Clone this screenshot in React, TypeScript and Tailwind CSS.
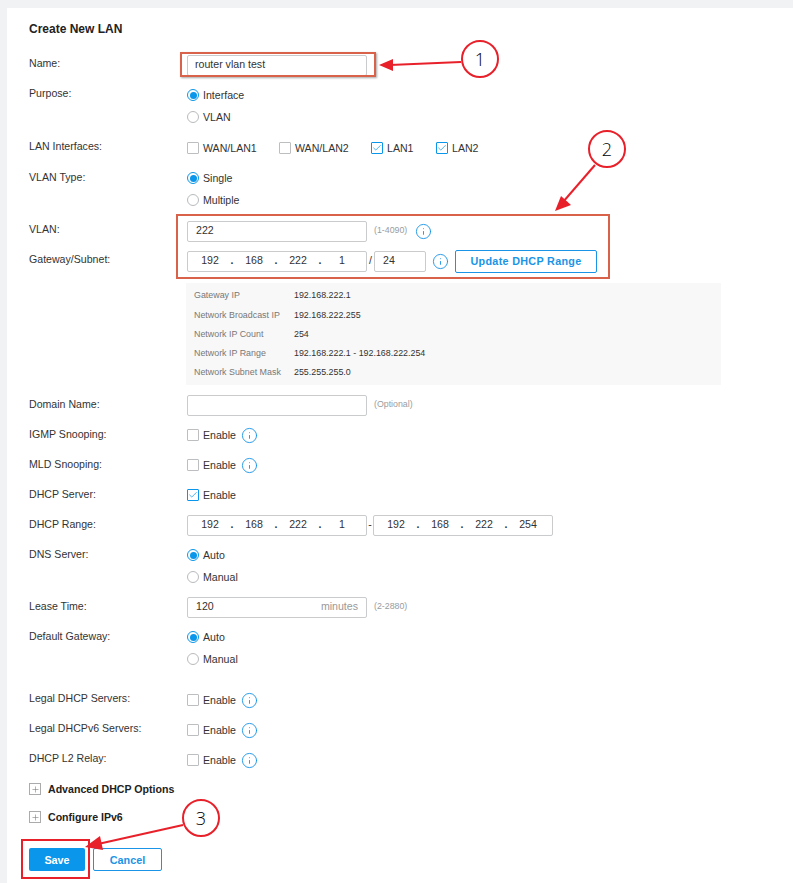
import type { ReactNode } from "react";
import { Check, Info, Plus } from "lucide-react";

const boxClass = "h-[21px] rounded-[2px] border border-[#c9cbcd] bg-white";

function Row({
  label,
  children,
  className = "mb-2",
  labelClass = "pt-[2px]",
}: {
  label?: string;
  children: ReactNode;
  className?: string;
  labelClass?: string;
}) {
  return (
    <div className={`flex ${className}`}>
      <div className={`h-[22px] w-[158px] shrink-0 text-[10.6px] leading-[14px] text-[#333] ${labelClass}`}>{label}</div>
      <div className="min-w-0 flex-1">{children}</div>
    </div>
  );
}

function Line({ children }: { children: ReactNode }) {
  return <div className="flex h-[22px] items-center">{children}</div>;
}

function Radio({ label, checked = false }: { label: string; checked?: boolean }) {
  return (
    <Line>
      {checked ? (
        <span className="flex h-3 w-3 items-center justify-center rounded-full border border-[#0a96ea] bg-white">
          <span className="h-[7px] w-[7px] rounded-full bg-[#0a96ea]" />
        </span>
      ) : (
        <span className="h-3 w-3 rounded-full border border-[#b8babc] bg-white" />
      )}
      <span className="ml-1 pt-[2px] text-[10.6px] text-[#333]">{label}</span>
    </Line>
  );
}

function CheckBox({ label, checked = false }: { label: string; checked?: boolean }) {
  return (
    <span className="flex items-center">
      {checked ? (
        <span className="flex h-3 w-3 items-center justify-center rounded-[1px] border border-[#0a96ea] text-[#0a96ea]">
          <Check size={10} strokeWidth={1.7} />
        </span>
      ) : (
        <span className="h-3 w-3 rounded-[1px] border border-[#bcbec0]" />
      )}
      <span className="ml-[4px] pt-[2px] text-[10.6px] text-[#333]">{label}</span>
    </span>
  );
}

function InfoIcon({ className = "" }: { className?: string }) {
  return <Info size={17} strokeWidth={1.3} className={`shrink-0 text-[#1a94e6] ${className}`} />;
}

function Enable({ checked = false, info = true }: { checked?: boolean; info?: boolean }) {
  return (
    <Line>
      <CheckBox label="Enable" checked={checked} />
      {info ? <InfoIcon className="ml-[5px]" /> : null}
    </Line>
  );
}

function Hint({ children }: { children: ReactNode }) {
  return <span className="ml-[7px] text-[8.8px] text-[#9a9c9e]">{children}</span>;
}

function IpBox({ parts }: { parts: string[] }) {
  return (
    <div className={`${boxClass} flex w-[180px] items-center pl-[5px] text-[10.6px] text-[#333]`}>
      {parts.map((part, i) => (
        <span key={i} className="flex items-center">
          {i > 0 ? <span className="w-[10px] text-center font-bold">.</span> : null}
          <span className="w-[34px] text-center">{part}</span>
        </span>
      ))}
    </div>
  );
}

const networkInfo = [
  ["Gateway IP", "192.168.222.1"],
  ["Network Broadcast IP", "192.168.222.255"],
  ["Network IP Count", "254"],
  ["Network IP Range", "192.168.222.1 - 192.168.222.254"],
  ["Network Subnet Mask", "255.255.255.0"],
];

function Expander({ label, className }: { label: string; className: string }) {
  return (
    <div className={`flex h-[22px] items-center ${className}`}>
      <span className="flex h-3 w-3 items-center justify-center border border-[#a9abad] text-[#777]">
        <Plus size={9} strokeWidth={1.5} />
      </span>
      <span className="ml-[7px] pt-[2px] text-[10.6px] font-bold text-[#222]">{label}</span>
    </div>
  );
}

function Callout({ n, className }: { n: string; className: string }) {
  return (
    <div
      className={`absolute flex h-[38px] w-[38px] items-center justify-center rounded-full border-2 border-[#e8202a] bg-white font-['Open_Sans',sans-serif] text-[18px] font-light text-black ${className}`}
    >
      {n}
    </div>
  );
}

export default function App() {
  return (
    <div className="relative h-[883px] w-[793px] overflow-hidden bg-[#f1f2f4] pl-[7px] pt-2 font-['Liberation_Sans',Arial,sans-serif]">
      <div className="h-full bg-white pl-[22px] pt-[11px]">
        <h1 className="mb-[15px] h-5 text-[12px] font-bold leading-5 text-[#222]">Create New LAN</h1>

        <Row label="Name:">
          <Line>
            <div className={`${boxClass} flex w-[180px] items-center pl-[7px] text-[10.6px] text-[#333]`}>router vlan test</div>
          </Line>
        </Row>
        <Row label="Purpose:" className="mb-[9px]">
          <Radio label="Interface" checked />
          <Radio label="VLAN" />
        </Row>
        <Row label="LAN Interfaces:">
          <Line>
            <span className="w-[92px]"><CheckBox label="WAN/LAN1" /></span>
            <span className="w-[92px]"><CheckBox label="WAN/LAN2" /></span>
            <span className="w-[65px]"><CheckBox label="LAN1" checked /></span>
            <CheckBox label="LAN2" checked />
          </Line>
        </Row>
        <Row label="VLAN Type:" className="mb-[9px]" labelClass="pt-[3px]">
          <Radio label="Single" checked />
          <Radio label="Multiple" />
        </Row>
        <Row label="VLAN:">
          <Line>
            <div className={`${boxClass} flex w-[180px] items-center pl-2 text-[10.6px] text-[#333]`}>222</div>
            <Hint>(1-4090)</Hint>
            <InfoIcon className="ml-[8px]" />
          </Line>
        </Row>
        <Row label="Gateway/Subnet:" className="mb-[11px]">
          <Line>
            <IpBox parts={["192", "168", "222", "1"]} />
            <span className="w-[7px] text-center text-[10.6px] text-[#333]">/</span>
            <div className={`${boxClass} flex w-[52px] items-center pl-2 text-[10.6px] text-[#333]`}>24</div>
            <InfoIcon className="ml-[6px]" />
            <button className="ml-[6px] h-[23px] w-[142px] rounded-[2px] border border-[#1a94e6] text-[10.8px] font-bold tracking-[0.3px] text-[#1a94e6]">
              Update DHCP Range
            </button>
          </Line>
        </Row>

        <div className="mb-[9px] ml-[157px] flex h-[102px] w-[535px] flex-col justify-center gap-[5.2px] bg-[#f8f8f8] pl-2 pt-[1px]">
          {networkInfo.map(([name, value]) => (
            <div key={name} className="flex h-[14px] items-center text-[8.9px]">
              <span className="w-[100px] text-[#777]">{name}</span>
              <span className="text-[#333]">{value}</span>
            </div>
          ))}
        </div>

        <Row label="Domain Name:" labelClass="pt-[3px]">
          <Line>
            <div className={`${boxClass} w-[180px]`} />
            <Hint>(Optional)</Hint>
          </Line>
        </Row>
        <Row label="IGMP Snooping:" labelClass="pt-[3px]"><Enable /></Row>
        <Row label="MLD Snooping:" labelClass="pt-[3px]"><Enable /></Row>
        <Row label="DHCP Server:" labelClass="pt-[3px]"><Enable checked info={false} /></Row>
        <Row label="DHCP Range:" labelClass="pt-[3px]">
          <Line>
            <IpBox parts={["192", "168", "222", "1"]} />
            <span className="w-[6px] text-center text-[10.6px] text-[#333]">-</span>
            <IpBox parts={["192", "168", "222", "254"]} />
          </Line>
        </Row>
        <Row label="DNS Server:" labelClass="pt-[3px]">
          <Radio label="Auto" checked />
          <Radio label="Manual" />
        </Row>
        <Row label="Lease Time:" labelClass="pt-[3px]">
          <Line>
            <div className={`${boxClass} flex w-[180px] items-center justify-between px-2 text-[10.6px]`}>
              <span className="text-[#333]">120</span>
              <span className="text-[#999]">minutes</span>
            </div>
            <Hint>(2-2880)</Hint>
          </Line>
        </Row>
        <Row label="Default Gateway:" className="mb-[19px]" labelClass="pt-[3px]">
          <Radio label="Auto" checked />
          <Radio label="Manual" />
        </Row>
        <Row label="Legal DHCP Servers:"><Enable /></Row>
        <Row label="Legal DHCPv6 Servers:"><Enable /></Row>
        <Row label="DHCP L2 Relay:" className="mb-[7px]"><Enable /></Row>

        <Expander label="Advanced DHCP Options" className="mb-[6px]" />
        <Expander label="Configure IPv6" className="mb-[20px]" />

        <div className="flex gap-2">
          <button className="h-[23px] w-[56px] rounded-[2px] bg-[#0a96ea] pt-[1px] text-[10.8px] font-bold text-white">Save</button>
          <button className="h-[23px] w-[69px] rounded-[2px] border border-[#1a94e6] bg-white pt-[1px] text-[10.8px] font-bold text-[#1a94e6]">Cancel</button>
        </div>
      </div>

      {/* annotations drawn on top of the screenshot */}
      <div className="absolute left-[180px] top-[52px] h-[25px] w-[196px] border-2 border-[#d9634a] shadow-[1px_1px_2px_rgba(0,0,0,0.35)]" />
      <div className="absolute left-[176px] top-[214px] h-[65px] w-[434px] border-2 border-[#d9634a]" />
      <div className="absolute left-[21px] top-[839px] h-[40px] w-[69px] border-2 border-[#e8202a]" />
      <svg className="absolute left-0 top-0" width="793" height="883" fill="#e8202a" stroke="#e8202a">
        <line x1="461" y1="62" x2="390" y2="65" strokeWidth="2" />
        <polygon points="379,65 393,59 393,71" strokeWidth="0" />
        <line x1="595" y1="165" x2="563" y2="202" strokeWidth="2" />
        <polygon points="555,211 561,196 571,205" strokeWidth="0" />
        <line x1="183" y1="825" x2="98" y2="844" strokeWidth="2" />
        <polygon points="85,847 100,836 103,850" strokeWidth="0" />
      </svg>
      <Callout n="1" className="left-[461px] top-[40px]" />
      <Callout n="2" className="left-[588px] top-[130px]" />
      <Callout n="3" className="left-[182px] top-[799px]" />
    </div>
  );
}
